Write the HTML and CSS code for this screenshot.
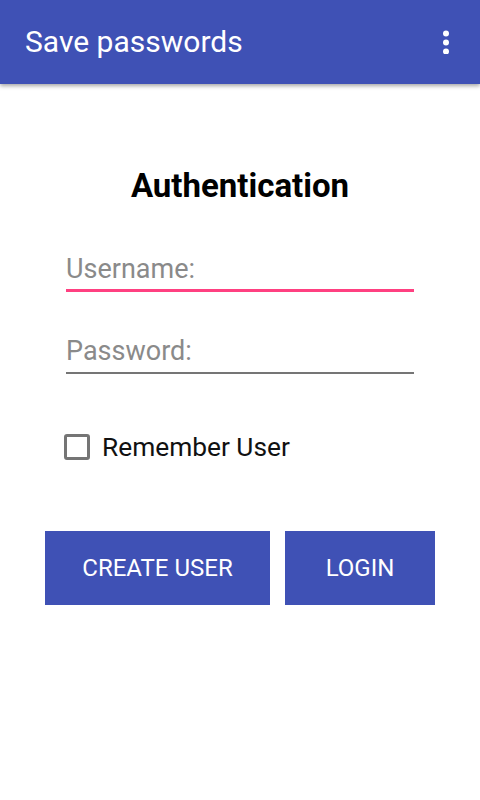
FILE: index.html
```html
<!DOCTYPE html>
<html>
<head>
<meta charset="utf-8">
<link rel="stylesheet" href="styles.css">
</head>
<body>
<header class="appbar">
  <span class="appbar-title">Save passwords</span>
  <svg class="overflow" width="6" height="24" viewBox="0 0 6 24">
    <circle cx="3" cy="3.5" r="3" fill="#fff"/>
    <circle cx="3" cy="12.5" r="3" fill="#fff"/>
    <circle cx="3" cy="21.5" r="3" fill="#fff"/>
  </svg>
</header>
<main class="content">
  <h1 class="heading">Authentication</h1>
  <div class="field field-focused"><span class="hint">Username:</span></div>
  <div class="field field-second"><span class="hint">Password:</span></div>
  <label class="check-row">
    <span class="checkbox"></span>
    <span class="check-label">Remember User</span>
  </label>
  <div class="buttons">
    <div class="btn btn-create">CREATE USER</div>
    <div class="btn btn-login">LOGIN</div>
  </div>
</main>
</body>
</html>
```
FILE: styles.css
```css
html, body {
  margin: 0;
  padding: 0;
  background: #fff;
  font-family: Roboto, "Noto Sans", sans-serif;
}
.appbar {
  height: 84px;
  background: #3F51B5;
  display: flex;
  align-items: center;
  justify-content: space-between;
  padding: 0 31px 0 25px;
  box-shadow: 0 2px 4px rgba(0,0,0,0.35);
  position: relative;
}
.appbar-title {
  color: #fff;
  font-size: 30px;
  line-height: 36px;
}
.overflow {
  display: block;
  margin-top: -1px;
}
.content {
  display: flex;
  flex-direction: column;
}
.heading {
  margin: 84px 0 0;
  text-align: center;
  font-size: 33px;
  line-height: 36px;
  font-weight: bold;
  color: #000;
}
.field {
  margin: 46px 66px 0;
  padding-top: 3px;
  padding-bottom: 4px;
  border-bottom: 2px solid #757575;
}
.field-focused {
  border-bottom: 3px solid #FF4081;
}
.field-second {
  margin-top: 40px;
  padding-bottom: 5px;
}
.hint {
  display: block;
  font-size: 27px;
  line-height: 32px;
  color: #8a8a8a;
}
.check-row {
  display: flex;
  align-items: center;
  height: 40px;
  margin: 53px 0 0 64px;
}
.checkbox {
  width: 20px;
  height: 20px;
  border: 3px solid #757575;
  border-radius: 3px;
}
.check-label {
  margin-left: 12px;
  font-size: 26.3px;
  color: #111;
}
.buttons {
  display: flex;
  gap: 15px;
  margin: 64px 0 0 45px;
}
.btn {
  height: 74px;
  background: #3F51B5;
  color: #fff;
  font-size: 24px;
  display: flex;
  align-items: center;
  justify-content: center;
}
.btn-create { width: 225px; }
.btn-login { width: 150px; }
```
